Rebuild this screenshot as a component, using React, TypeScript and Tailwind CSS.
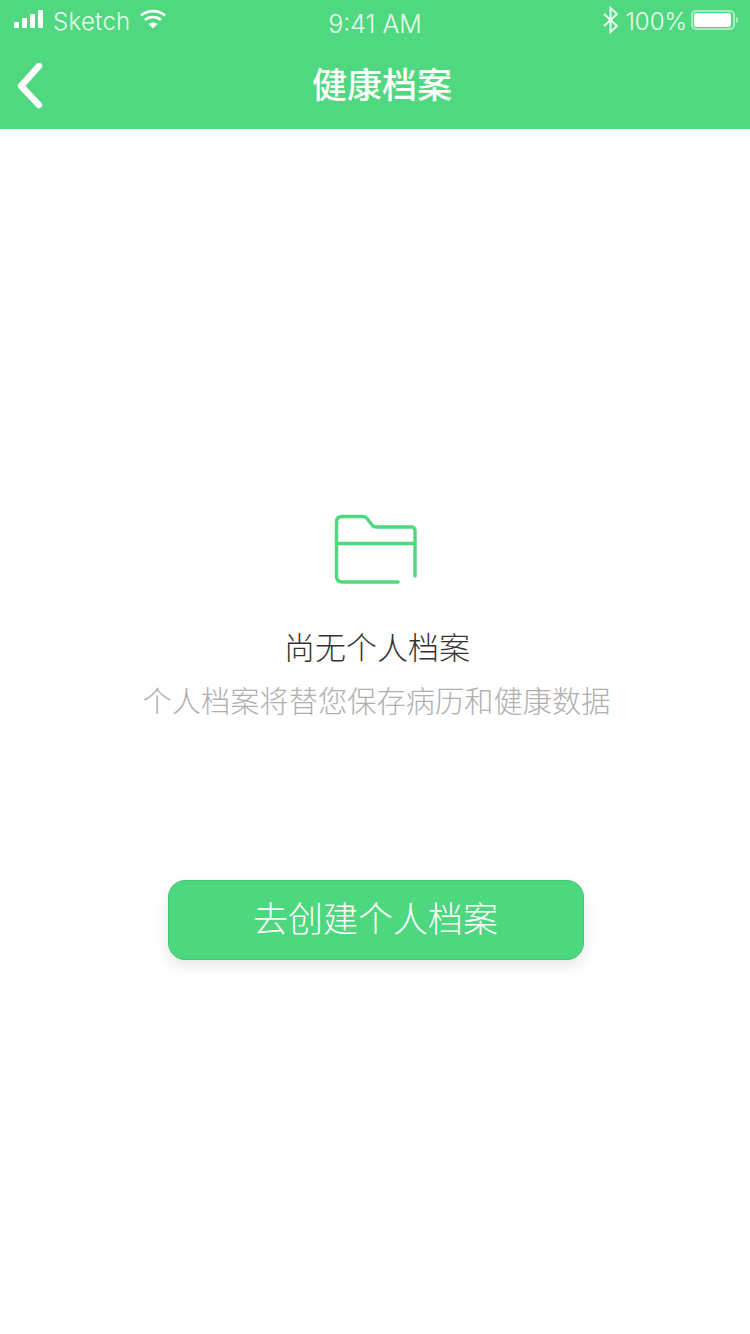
export default function App() {
  return (
    <div className="flex h-[1334px] w-[750px] flex-col overflow-hidden bg-white font-['Roboto','Noto_Sans_CJK_SC',sans-serif]">
      <header className="h-[129px] shrink-0 bg-[#4fd87f] text-white">
        <div className="relative flex h-[41px] items-center justify-between pl-[14px] pr-[12px]">
          <div className="flex w-[240px] items-center">
            <svg width="30" height="18" viewBox="0 0 30 18" fill="#fff" className="mb-[3px]">
              <rect x="0" y="12" width="5" height="6" rx="0.8" />
              <rect x="8" y="8" width="5" height="10" rx="0.8" />
              <rect x="16" y="4" width="5" height="14" rx="0.8" />
              <rect x="24" y="0" width="5" height="18" rx="0.8" />
            </svg>
            <span className="ml-[9px] mt-[3px] font-['Inter','Noto_Sans',sans-serif] text-[24px] font-light leading-none tracking-[0.3px] text-[#e9fbef]">Sketch</span>
            <svg width="26" height="20" viewBox="0 0 26 20" fill="none" stroke="#fff" strokeWidth="2.6" className="mb-[4px] ml-[9px]">
              <path d="M1 6.500C7.500 .6 18.500 .6 25 6.500" />
              <path d="M5 11C9.500 7 16.500 7 21 11" />
              <path d="M13 19.500 8.600 15C11 13 15 13 17.400 15Z" fill="#fff" stroke="none" />
            </svg>
          </div>
          <span className="ml-[-2px] mt-[7px] font-['Inter','Noto_Sans',sans-serif] text-[25px] font-light leading-none text-[#e9fbef]">9:41 AM</span>
          <div className="flex w-[240px] items-center justify-end">
            <svg width="18" height="28" viewBox="0 0 18 28" fill="none" stroke="#eafbf0" strokeWidth="2" className="mb-[1px]">
              <path d="M2 8 15 20 8.500 26V2L15 8 2 20" />
            </svg>
            <span className="ml-[5px] mt-[3px] font-['Inter','Noto_Sans',sans-serif] text-[24px] font-light leading-none text-[#e9fbef]">100%</span>
            <div className="ml-[4px] mb-[2px] flex items-center">
              <div className="flex h-[20px] w-[44px] items-center justify-center rounded-[5px] border-2 border-[#a7ecbe]">
                <div className="h-[14px] w-[37px] rounded-[2.5px] bg-white" />
              </div>
              <div className="ml-[1px] h-[6px] w-[2px] rounded-r-[2px] bg-[#a7ecbe]" />
            </div>
          </div>
        </div>
        <div className="flex h-[88px] items-center pl-[16px]">
          <svg width="30" height="46" viewBox="0 0 30 46" fill="none" stroke="#fff" strokeWidth="6.400" strokeLinecap="round" strokeLinejoin="round" className="mt-[1px] shrink-0">
            <path d="M23 3 5 23 23 42" />
          </svg>
          <h1 className="ml-[266px] mt-[2px] text-[35px] font-medium leading-none">健康档案</h1>
        </div>
      </header>
      <main className="flex flex-col items-center pt-[385px]">
        <svg width="84" height="70" viewBox="0 0 84 70" fill="none" stroke="#4fd87f" strokeWidth="3.4" strokeLinecap="round" strokeLinejoin="round" className="mr-[-1px]">
          <path d="M81 62V17C81 14.500 79.500 13 77 13H42C40.500 13 39.500 12.500 38.500 11.500L33 4.500C32 3 31 2.500 29 2.500H8C4.500 2.500 2.500 4.500 2.500 8V62C2.500 66 4.500 68 8 68H64" />
          <path d="M2.500 29.500H81" />
        </svg>
        <p className="ml-[4px] mt-[49px] text-[31px] font-light leading-none text-[#333333]">尚无个人档案</p>
        <p className="ml-[3px] mt-[24px] text-[29.25px] font-light leading-none text-[#b0b0b0]">个人档案将替您保存病历和健康数据</p>
        <button className="ml-[1px] mt-[163px] flex h-[80px] w-[416px] items-center justify-center rounded-[17px] border border-[#46c873] bg-[#4dd77e] pt-[2px] text-[35px] font-light text-white shadow-[0_6px_14px_rgba(0,0,0,0.1)]">去创建个人档案</button>
      </main>
    </div>
  );
}
